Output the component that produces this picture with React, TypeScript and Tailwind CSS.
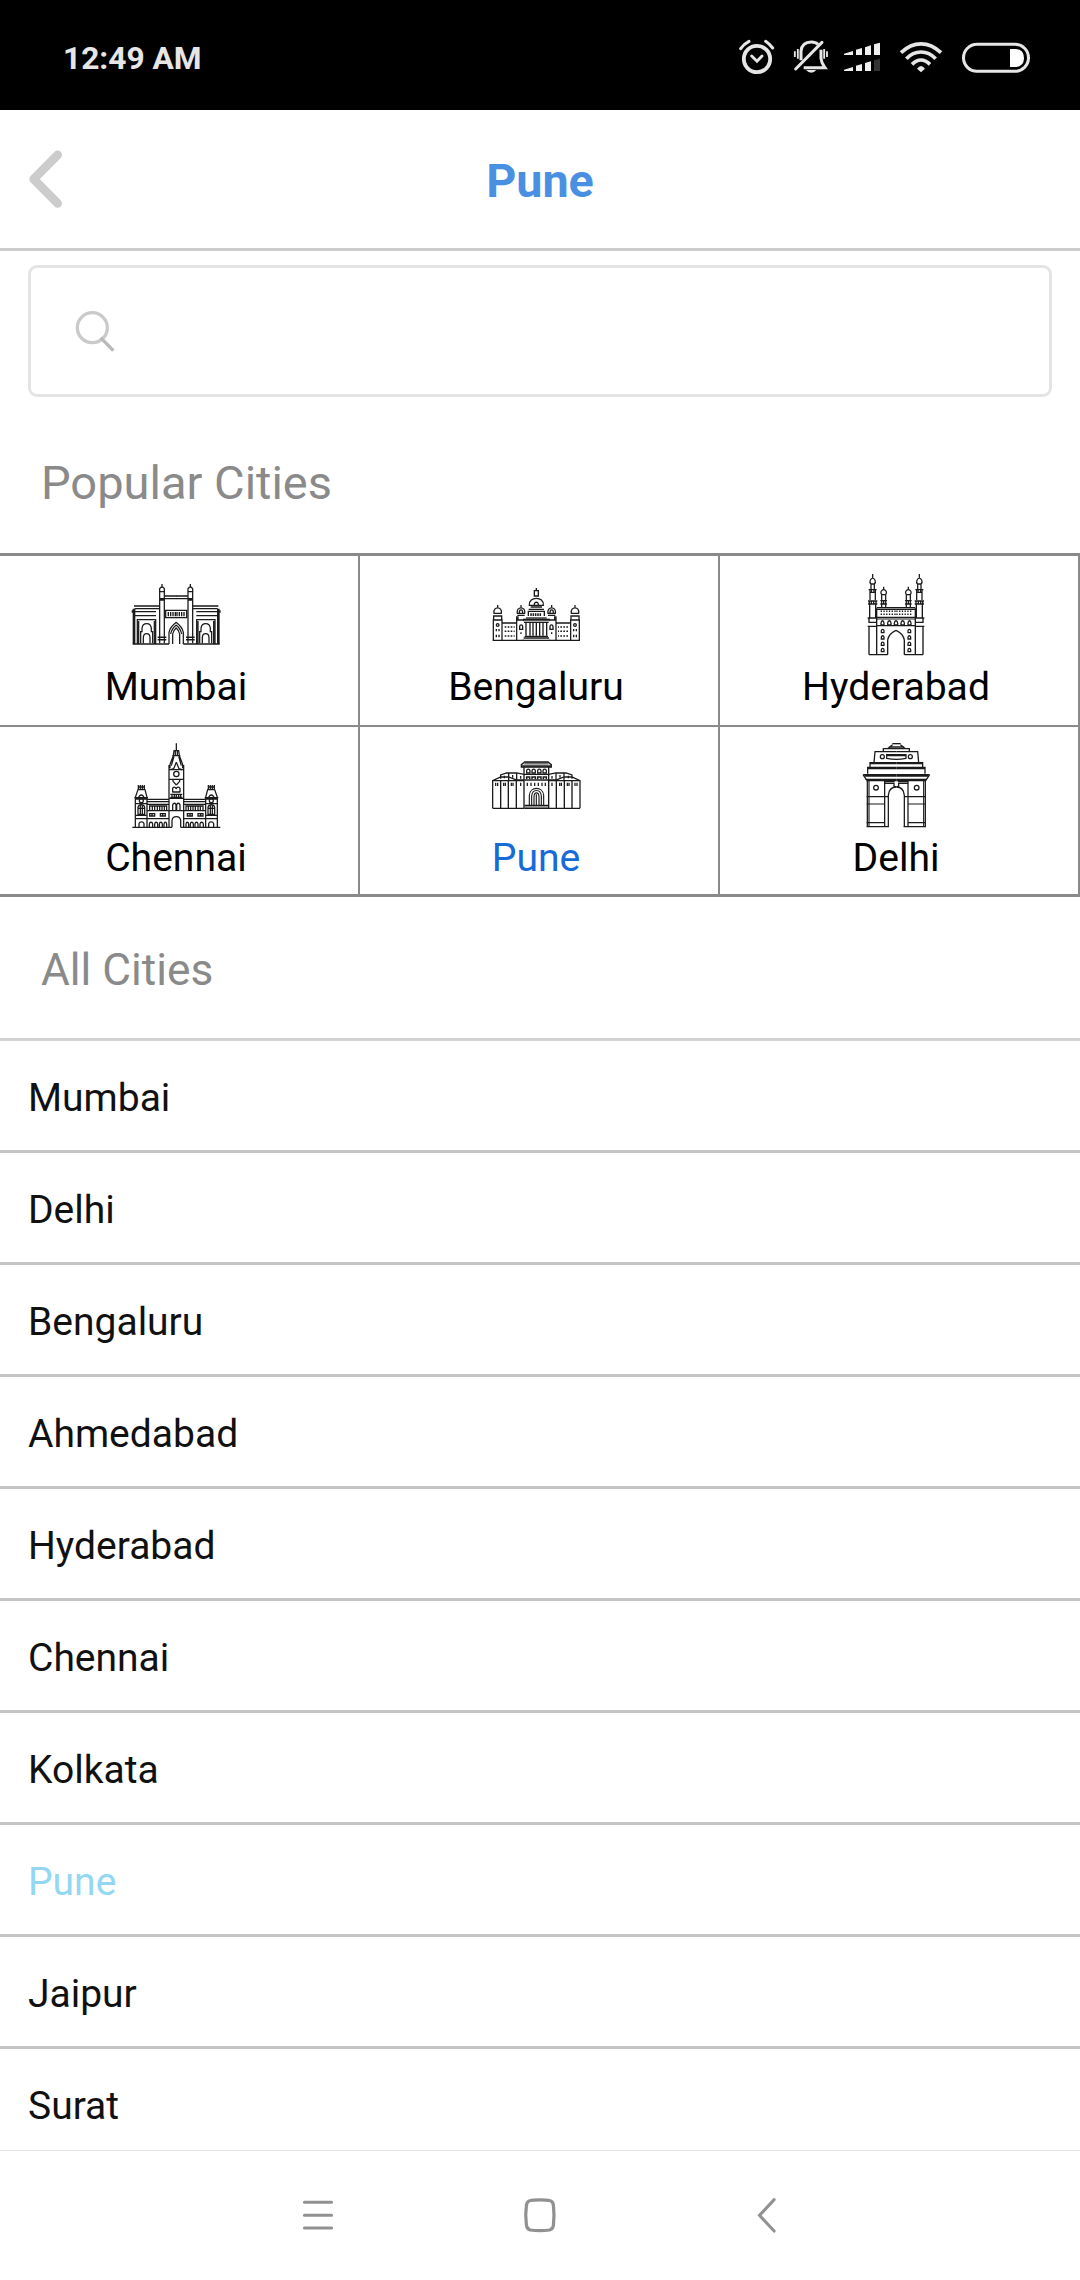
import type { ReactNode } from "react";

/** Draws its children once as given and once flipped about the vertical axis x = cx. */
function Mirror({ cx, children }: { cx: number; children: ReactNode }) {
  return (
    <>
      {children}
      <g transform={`translate(${2 * cx} 0) scale(-1 1)`}>{children}</g>
    </>
  );
}

function Landmark({ viewBox, children }: { viewBox: string; children: ReactNode }) {
  return (
    <svg viewBox={viewBox} className="size-[100px] shrink-0" fill="none" stroke="#1a1a1a" strokeWidth="3.8">
      {children}
    </svg>
  );
}

function GatewayOfIndia() {
  return (
    <Landmark viewBox="27 0 300 300">
      <Mirror cx={168.5}>
        <path d="M119 96V250M133 96V250M117 95H135M119 94V86Q126 76 133 86V94M126 80V72M119 116H133M119 120H133" />
        <path d="M133 108H169M133 116H169M135 151H169M135 173H169M137 151V173" />
        <path d="M40 146V252M44 146V252M42 138H118" strokeWidth="4" />
        <path d="M44 146H118M37 155H108M40 167H108M37 151V158" />
        <path d="M52 252V179H107V252M56 252V183M103 252V183" />
        <path d="M62 250V215H66V205C68 186 92 186 94 205V215H98V250M70 250V232C71 217 89 217 90 232V250" />
        <path d="M113 232H139M113 239H139" strokeWidth="4.5" />
        <path d="M147 252V217Q150 201 169 187M152 222Q155 206 169 195M158 252V222Q160 211 169 203" />
        <path d="M38 252H147" strokeWidth="4" />
        <path d="M145 156V169M152 156V169M159 156V169M166 156V169" strokeWidth="4" />
      </Mirror>
    </Landmark>
  );
}

function VidhanaSoudha() {
  return (
    <Landmark viewBox="27 -30 300 300">
      <path d="M169 54V61M163 62H175V78H163ZM161 78H177M148 106C145 78 193 78 190 106ZM163 105C162 94 176 94 175 105" strokeWidth="4" />
      <path d="M152 111H186M146 118H192M145 124V138M193 124V138M143 124H195" strokeWidth="4" />
      <path d="M153 138V130M160 138V130M167 138V130M174 138V130M181 138V130" strokeWidth="4.5" />
      <path d="M138 144H200" />
      <path d="M129 150H209" strokeWidth="7" stroke="#555" />
      <path d="M129 148H209M132 157H206" />
      <path d="M138 158V197M150 158V197M159 158V197M169 158V197M179 158V197M189 158V197M200 158V197" strokeWidth="4" />
      <path d="M134 199H204M131 204H207M127 211H211" strokeWidth="4" />
      <Mirror cx={169}>
        <path d="M53 105V112M42 130C38 108 68 108 64 130ZM41 139V150H65V139M39 138H67M40 150V211M66 150V211M38 150H68" />
        <circle cx="53" cy="165" r="4" strokeWidth="4" />
        <path d="M49 177V184M57 177V184M49 194V202M57 194V202" strokeWidth="4" />
        <path d="M74 171H104M74 184H104M74 198H104" strokeWidth="4.5" strokeDasharray="5 4" />
        <path d="M66 159H110M38 211H132M110 139V211M123 105V112M112 130C108 108 138 108 134 130ZM118 128C118 117 128 117 128 128M112 136H134M110 150H132M114 139V150" />
        <path d="M119 178V169C120 163 127 163 128 169V178ZM123 187V192" strokeWidth="4" />
      </Mirror>
    </Landmark>
  );
}

function Charminar() {
  return (
    <Landmark viewBox="-3 0 300 300">
      <Mirror cx={138}>
        <path d="M68 42V54M63 72C56 65 62 56 68 54C74 56 80 65 73 72ZM63 72V88M73 72V88M56 89H80M58 97H78M60 89V120M76 89V120" />
        <path d="M54 123H82M54 132H82M58 123V132M64 123V132M71 123V132M78 123V132M64 89V97M72 89V97" strokeWidth="4" />
        <path d="M59 132V172M77 132V172M53 174H80M55 187H80M53 199H80M57 174V187M57 199V284M80 145V284M57 284H113" strokeWidth="4" />
        <path d="M101 80V88M95 104C89 96 95 90 101 88C107 90 113 96 107 104ZM95 104V143M107 104V143M91 122H111M91 132H111M101 122V132" />
        <path d="M80 143H138M80 148H138M80 172H138M80 177H138M80 197H138" strokeWidth="3.4" />
        <path d="M113 284V240Q116 221 138 211" strokeWidth="4" />
        <path d="M93 195V189C94 180 101 180 102 189V195ZM113 195V189C114 180 122 180 123 189V195Z" />
        <path d="M94 218V212C95 207 101 207 102 212V218ZM94 237V231C95 226 101 226 102 231V237ZM94 256V250C95 245 101 245 102 250V256ZM94 275V269C95 264 101 264 102 269V275Z" />
        <path d="M92 154H137M92 163H137" strokeWidth="4.5" strokeDasharray="4 4.2" />
      </Mirror>
      <path d="M133 195V189C134 180 142 180 143 189V195Z" />
    </Landmark>
  );
}

function CentralStation() {
  return (
    <Landmark viewBox="27 -12 300 300">
      <circle cx="169" cy="117" r="8" />
      <path d="M169 25V47M161 47H177M157 62H181M147 104H191M147 133H191M147 190H191M147 227H191M157 171H181M151 178H187M151 187H187" />
      <path d="M156 277V256C158 241 180 241 182 256V277M158 226V210C160 203 167 203 168 210V226M170 226V210C171 203 178 203 180 210V226M158 171V160C160 155 167 155 168 162C170 155 178 155 180 160V171" />
      <path d="M156 178V187M163 178V187M169 178V187M176 178V187M182 178V187" strokeWidth="4" />
      <Mirror cx={169}>
        <path d="M162 47L160 62L150 88V100M147 90V277M166 47V62M162 64L154 92M169 82L161 101L152 104M169 150L159 139V134" />
        <path d="M55 150V164M61 150V164M55 156H73M67 150V164M73 150V164M53 164H76M54 164L46 187V277M75 164L81 187V277M43 188H84M46 192H82M56 186Q64 174 72 186" />
        <circle cx="64" cy="197" r="6" />
        <path d="M46 206H82M54 238V217C55 207 73 207 74 217V238ZM54 220H74M61 210V238M67 210V238M46 251H147M37 277H156M46 241H80" />
        <path d="M81 193H147M81 200H147M81 208H147M81 227H147" />
        <path d="M89 226V213H140V226M97 213V226M104 213V226M112 213V226M119 213V226M126 213V226M133 213V226" />
        <path d="M89 236H104V243H89ZM96 236V243M121 236H136V243H121ZM128 236V243M57 277V266C59 259 70 259 72 266V277" />
        <path d="M88 277V267C89 260 97 260 98 267V277M104 277V267C105 260 112 260 113 267V277M118 277V267C119 260 126 260 127 267V277M132 277V267C133 260 139 260 140 267V277" />
      </Mirror>
    </Landmark>
  );
}

function ShaniwarWada() {
  return (
    <Landmark viewBox="27 -27 300 300">
      <path d="M133 70H205" strokeWidth="7" stroke="#777" />
      <path d="M124 78H214" strokeWidth="7" stroke="#555" />
      <path d="M134 200H204" strokeWidth="8" stroke="#999" />
      <path d="M134 66H204L214 74V81H124V74ZM132 103H206M134 196H204M134 205H204" />
      <path d="M133 120H205" strokeWidth="4.5" />
      <path d="M140 99V92C141 86 149 86 150 92V99ZM156 99V92C157 86 165 86 166 92V99ZM173 99V92C174 86 182 86 183 92V99ZM189 99V92C190 86 198 86 199 92V99Z" />
      <path d="M140 117V111H149V117M156 117V111H166V117M173 117V111H183V117M190 117V111H199V117" strokeWidth="4.5" />
      <path d="M142 128V138M153 128V138M164 128V138M175 128V138M186 128V138M196 128V138" />
      <path d="M148 195V166C150 138 189 138 191 166V195M155 195V168C157 146 182 146 184 168V195M162 195V170C163 155 176 155 177 170V195M169 163V195" strokeWidth="3.4" />
      <Mirror cx={169}>
        <path d="M132 81V205M38 205H134" strokeWidth="4" />
        <path d="M38 205V122L62 111H86L110 120H132M38 122H132M62 116V105L80 99H110L132 103M86 100V121M110 100V121" />
        <path d="M62 122V205M85 122V205M109 122V205" strokeWidth="4" />
        <path d="M73 107V115M98 105V113M122 108V116M47 128V138M53 128V138M71 128V138M76 128V138M94 128V138M99 128V138M122 128V138" />
      </Mirror>
    </Landmark>
  );
}

function IndiaGate() {
  return (
    <Landmark viewBox="-3 3 300 300">
      <path d="M127 41H152" strokeWidth="4" />
      <path d="M128 44L118 51H161L151 44M118 51V56M161 51V56M100 65V56H178V65M110 74H168V85Q139 91 110 85ZM110 77H168" />
      <Mirror cx={139}>
        <circle cx="97" cy="80" r="6" />
        <circle cx="78" cy="173" r="7" />
        <path d="M139 65H75L72 98M139 98H60V112M139 112H53V131M53 116H139M60 101H139" />
        <path d="M40 134H139M43 138H139M47 148H139" />
        <path d="M39 134L51 152H139" />
        <path d="M52 152V290M104 152V290M104 155H134M104 160H132V168L139 171M115 290V196Q117 171 139 171" />
        <path d="M50 200H116M50 222H104M50 278H104M50 290H117M57 152V290" strokeWidth="3.4" />
      </Mirror>
    </Landmark>
  );
}

function AlarmIcon() {
  return (
    <svg viewBox="108 108 126 120" className="h-10 w-[42px]" fill="none" stroke="#e6e6e6">
      <circle cx="171" cy="177" r="39.5" strokeWidth="11.5" />
      <path d="M155 168L171 184L186 168" strokeWidth="8.5" strokeLinecap="round" />
      <path d="M122 146Q131 132 147 124M218 144Q209 132 197 124" strokeWidth="9" strokeLinecap="round" />
    </svg>
  );
}

function BellOffIcon() {
  return (
    <svg viewBox="270 108 126 120" className="h-10 w-[42px]" fill="none" stroke="#e6e6e6">
      <path d="M303 181V154C305 132 318 126 334 126C343 126 350 129 354 133M363 149V175C364 189 370 196 375 203H311" strokeWidth="9" />
      <path d="M287 207L366 127" strokeWidth="9" strokeLinecap="round" />
      <path d="M284.500 154V171M293.500 147V176M372.500 147V176M381 154V171" strokeWidth="5.5" />
      <path d="M318 210H349Q334 227 318 210Z" fill="#e6e6e6" stroke="none" />
    </svg>
  );
}

function SignalIcon() {
  return (
    <svg viewBox="420 108 132 120" className="h-10 w-11" fill="#eee">
      <path d="M432 161L459 153V165H432ZM468 149L486 144V165H468ZM495 142L513 136V165H495ZM522 133L540 128V165H522Z" />
      <path d="M432 209L459 201V213H432ZM468 197L486 192V213H468ZM495 189L513 184V213H495Z" />
      <path d="M522 181L540 176V213H522Z" fill="#333" />
    </svg>
  );
}

function WifiIcon() {
  return (
    <svg viewBox="594 108 138 120" className="h-10 w-[46px]" fill="none" stroke="#e6e6e6" strokeWidth="11">
      <path d="M603 158Q631 131.500 663 131.500Q695 131.500 723 158M619 176Q638 156 663 156Q688 156 707 176M636 193Q649 180 663 180Q677 180 690 193" />
      <path d="M651 206Q663 190 675 206L663 217Z" fill="#e6e6e6" stroke="none" />
    </svg>
  );
}

function BatteryIcon() {
  return (
    <svg viewBox="780 108 216 120" className="h-10 w-[72px]" fill="none">
      <rect x="790.500" y="133" width="195" height="81" rx="40.500" stroke="#e6e6e6" strokeWidth="9" />
      <path d="M930 147H948Q972 149 972 174Q972 199 948 201H930Z" fill="#fff" />
    </svg>
  );
}

const popularCities = [
  { name: "Mumbai", Icon: GatewayOfIndia },
  { name: "Bengaluru", Icon: VidhanaSoudha },
  { name: "Hyderabad", Icon: Charminar },
  { name: "Chennai", Icon: CentralStation },
  { name: "Pune", Icon: ShaniwarWada },
  { name: "Delhi", Icon: IndiaGate },
];

const allCities = [
  "Mumbai",
  "Delhi",
  "Bengaluru",
  "Ahmedabad",
  "Hyderabad",
  "Chennai",
  "Kolkata",
  "Pune",
  "Jaipur",
  "Surat",
];

const selectedCity = "Pune";

export default function App() {
  return (
    <div className="flex h-[2280px] w-[1080px] flex-col overflow-hidden bg-white font-['Roboto',sans-serif]">
      <div className="flex h-[110px] shrink-0 items-start bg-black pt-9 pr-12 pl-[63px]">
        <span className="mt-[3px] text-[31.700px] leading-[40px] font-bold text-[#e6e6e6]">12:49 AM</span>
        <div className="ml-auto flex">
          <AlarmIcon />
          <div className="ml-3"><BellOffIcon /></div>
          <div className="ml-2"><SignalIcon /></div>
          <div className="ml-3.5"><WifiIcon /></div>
          <div className="ml-4"><BatteryIcon /></div>
        </div>
      </div>

      <header className="grid h-[141px] shrink-0 grid-cols-[1fr_auto_1fr] items-center border-b-[3px] border-[#ccc] px-6">
        <button aria-label="Back" className="-mt-px h-[70px] w-12">
          <svg viewBox="72 431 144 210" className="h-[70px] w-12" fill="none" stroke="#ccc" strokeWidth="26" strokeLinecap="round" strokeLinejoin="round">
            <path d="M173 463.500L101 536.500L173 609" />
          </svg>
        </button>
        <h1 className="mt-[3px] text-[46.700px] leading-[56px] font-bold text-[#4a90e2]">Pune</h1>
      </header>

      <div className="mx-7 mt-3.5 flex h-[132px] shrink-0 items-center rounded-[9px] border-[3px] border-[#e4e4e4] pl-[39px]">
        <svg viewBox="210 192 150 156" className="h-[52px] w-[50px]" fill="none">
          <circle cx="277" cy="260" r="45" stroke="#cacaca" strokeWidth="10" />
          <path d="M302 290L340 329" stroke="#b9b9b9" strokeWidth="10" />
        </svg>
      </div>

      <h2 className="mt-[58px] ml-[41px] h-[98px] shrink-0 text-[47px] leading-[56px] text-[#8a8a8a]">Popular Cities</h2>

      <div className="grid h-[344px] shrink-0 grid-cols-3 grid-rows-[171px_167px] border-y-[3px] border-[#8a8a8a]">
        {popularCities.map(({ name, Icon }, i) => (
          <div
            key={name}
            className={`flex flex-col items-center border-r-2 border-[#8a8a8a] pt-1 ${i < 3 ? "border-b-2" : ""}`}
          >
            <Icon />
            <span className={`mt-1 mr-1.5 text-[39.100px] leading-[47px] ${name === selectedCity ? "text-[#166bd9]" : "text-black"}`}>
              {name}
            </span>
          </div>
        ))}
      </div>

      <h2 className="mt-[47px] ml-[41px] h-[94px] shrink-0 text-[44.200px] leading-[53px] text-[#8a8a8a]">All Cities</h2>

      <ul className="min-h-0 flex-1 overflow-hidden border-t-[3px] border-[#d3d3d3]">
        {allCities.map((name) => (
          <li
            key={name}
            className={`flex h-28 items-start border-b-[3px] border-[#c4c4c4] pt-[34px] pl-7 text-[39px] leading-[47px] ${name === selectedCity ? "text-[#93d7f2]" : "text-[#111]"}`}
          >
            {name}
          </li>
        ))}
      </ul>

      <nav className="flex h-[130px] shrink-0 items-start border-t border-[#e4e4e4] bg-white pt-[44px] pl-[298px]">
        <svg viewBox="106 198 112 112" className="size-10" stroke="#919191" strokeWidth="8.500" strokeLinecap="round">
          <path d="M124 218H200M124 254.500H200M124 290.500H200" />
        </svg>
        <svg viewBox="728 198 112 112" className="ml-[182px] size-10" fill="none" stroke="#919191" strokeWidth="9">
          <path d="M783.500 211.500Q803 211.500 811 213.500Q820 215 821.500 226Q825 254 821.500 283Q820 294 811 296Q784 299.500 757 296Q748 294 746 283Q742 254 746 226Q748 215 757 213.500Q764 211.500 783.500 211.500Z" />
        </svg>
        <svg viewBox="1364 198 112 112" className="ml-[187px] size-10" fill="none" stroke="#919191" strokeWidth="8.500" strokeLinecap="round">
          <path d="M1440 211L1399 255L1440 299" />
        </svg>
      </nav>
    </div>
  );
}
